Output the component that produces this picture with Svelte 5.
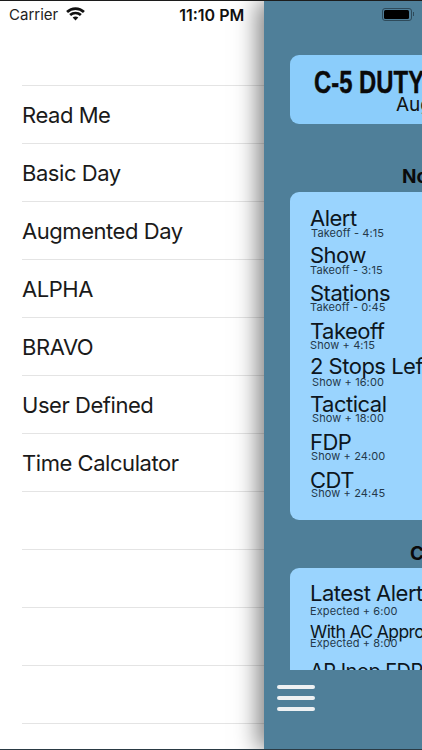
<script>
	const menu = ['Read Me', 'Basic Day', 'Augmented Day', 'ALPHA', 'BRAVO', 'User Defined', 'Time Calculator', '', '', '', '', '']

	const normal = [
		{ name: 'Alert', sub: 'Takeoff - 4:15', cls: 'in1 up2', rowCls: 'h37' },
		{ name: 'Show', sub: 'Takeoff - 3:15', cls: 'up2', rowCls: '' },
		{ name: 'Stations', sub: 'Takeoff - 0:45', cls: 'up3', rowCls: '' },
		{ name: 'Takeoff', sub: 'Show + 4:15', cls: 'up3', rowCls: 'h35' },
		{ name: '2 Stops Left', sub: 'Show + 16:00', cls: 'in2 up1', rowCls: '' },
		{ name: 'Tactical', sub: 'Show + 18:00', cls: 'in2 up3', rowCls: '' },
		{ name: 'FDP', sub: 'Show + 24:00', cls: 'in1 up3', rowCls: '' },
		{ name: 'CDT', sub: 'Show + 24:45', cls: 'in1 up4', rowCls: '' }
	]
</script>

<div class="screen">
	<aside class="side">
		<div class="status">
			<span class="carrier">Carrier</span>
			<svg class="wifi" viewBox="0 0 18 13" width="19" height="14">
				<path d="M1 4.6C5.5.3 12.5.3 17 4.6" />
				<path d="M3.9 7.5c2.9-2.6 7.3-2.6 10.2 0" />
				<path class="dot" d="M6.3 9.9 9 12.6l2.7-2.7c-1.6-1.3-3.8-1.3-5.4 0z" />
			</svg>
			<span class="time">11:10 PM</span>
		</div>
		<ul class="menu">
			{#each menu as item}
				<li>{item}</li>
			{/each}
		</ul>
	</aside>

	<main class="panel">
		<div class="panel-top">
			<div class="battery"><span class="charge"></span></div>
			<span class="nub"></span>
		</div>
		<div class="content">
			<div class="title-card">
				<h1>C-5 DUTY DAY</h1>
				<p>Augmented Day</p>
			</div>
			<h2 class="h-normal">Normal</h2>
			<div class="card normal">
				{#each normal as row}
					<div class="row {row.rowCls}">
						<div class="name">{row.name}</div>
						<div class="sub {row.cls}">{row.sub}</div>
					</div>
				{/each}
			</div>
			<h2 class="h-other">Contingency</h2>
			<div class="card other">
				<div class="name">Latest Alert</div>
				<div class="sub late">Expected + 6:00</div>
				<div class="name small">With AC Approval</div>
				<div class="sub tight">Expected + 8:00</div>
				<div class="name inop">AP Inop FDP</div>
			</div>
		</div>
		<footer class="footer">
			<button class="burger" aria-label="Menu">
				<span></span><span></span><span></span>
			</button>
		</footer>
	</main>
</div>

<style>
	:global(body) {
		margin: 0;
		background: #fff;
	}

	.screen {
		display: flex;
		width: 422px;
		height: 750px;
		box-sizing: border-box;
		border-top: 1px solid #1c1c1c;
		border-bottom: 1px solid #2a3a44;
		overflow: hidden;
		font-family: Inter, "Liberation Sans", sans-serif;
		color: #111;
	}

	/* left menu */
	.side {
		width: 264px;
		flex: none;
		background: #fff;
	}

	.status {
		display: flex;
		align-items: center;
		height: 27px;
		padding-left: 9px;
		font-size: 15px;
		white-space: nowrap;
	}

	.carrier {
		color: #222;
	}

	.wifi {
		margin-left: 8px;
		margin-top: -1px;
		fill: none;
		stroke: #111;
		stroke-width: 2.6;
	}

	.wifi .dot {
		fill: #111;
		stroke: none;
	}

	.time {
		margin-left: 94px;
		font-weight: 600;
		font-size: 16px;
	}

	.menu {
		list-style: none;
		margin: 57px 0 0 22px;
		padding: 0;
	}

	.menu li {
		height: 57px;
		line-height: 58px;
		border-top: 1px solid #e4e4e4;
		font-size: 22px;
		color: #1a1a1a;
		letter-spacing: -0.45px;
	}

	/* sliding panel */
	.panel {
		flex: 1;
		min-width: 0;
		display: flex;
		flex-direction: column;
		background: #4f7f99;
		box-shadow: -6px 0 22px rgba(0, 0, 0, 0.5);
		position: relative;
	}

	.panel-top {
		height: 54px;
		flex: none;
		display: flex;
		align-items: flex-start;
		padding: 7px 0 0 118px;
		box-sizing: border-box;
	}

	.battery {
		width: 30px;
		height: 13px;
		border: 1px solid #2e4a5a;
		border-radius: 3px;
		padding: 1px;
		box-sizing: border-box;
	}

	.charge {
		display: block;
		height: 100%;
		width: 25px;
		background: #000;
		border-radius: 1.5px;
	}

	.nub {
		width: 1px;
		height: 4px;
		margin: 4px 0 0 1px;
		background: #2e4a5a;
	}

	.content {
		flex: 1;
		min-height: 0;
		overflow: hidden;
		padding-left: 26px;
	}

	.title-card {
		width: 320px;
		height: 69px;
		box-sizing: border-box;
		background: #8bcdfb;
		border-radius: 9px;
		padding: 13px 0 0 24px;
	}

	.title-card h1 {
		margin: 0;
		font-family: "Liberation Sans", sans-serif;
		font-size: 31px;
		line-height: 30px;
		font-weight: 700;
		white-space: nowrap;
		color: #0a0a0a;
		-webkit-text-stroke: 0.4px #0a0a0a;
		transform: scaleX(0.77);
		transform-origin: left center;
	}

	.title-card p {
		margin: -4px 0 0 82px;
		font-size: 19px;
		line-height: 22px;
		white-space: nowrap;
	}

	h2 {
		margin: 0;
		font-size: 19px;
		line-height: 24px;
		font-weight: 700;
		white-space: nowrap;
		color: #0a0a0a;
	}

	.h-normal {
		margin-top: 41px;
		padding-left: 112px;
	}

	.h-other {
		margin-top: 22px;
		padding-left: 120px;
	}

	.card {
		width: 320px;
		box-sizing: border-box;
		background: #9ad4fe;
		border-radius: 9px;
		padding-left: 20px;
		white-space: nowrap;
	}

	.normal {
		height: 328px;
		margin-top: 3px;
		padding-top: 14px;
	}

	.other {
		margin-top: 2px;
		padding-top: 13px;
	}

	.row {
		height: 38px;
	}

	.row.h37 {
		height: 37px;
	}

	.row.h35 {
		height: 35px;
	}

	.name {
		font-size: 22px;
		line-height: 24px;
		letter-spacing: -0.5px;
		color: #0d1620;
	}

	.sub {
		font-size: 11px;
		line-height: 12px;
		margin-top: -1px;
		color: #24394a;
		letter-spacing: 0.1px;
	}

	.in1 {
		margin-left: 1px;
	}

	.in2 {
		margin-left: 2px;
	}

	.up1 {
		margin-top: -2px;
	}

	.up2 {
		margin-top: -3px;
	}

	.up3 {
		margin-top: -4px;
	}

	.up4 {
		margin-top: -5px;
	}

	.late {
		margin-top: 0;
	}

	.name.small {
		font-size: 17.5px;
		line-height: 22px;
		letter-spacing: -0.6px;
		margin-top: 4px;
	}

	.tight {
		margin-top: -6px;
	}

	.name.inop {
		margin-top: 10px;
		font-size: 20px;
	}

	.footer {
		height: 79px;
		flex: none;
		background: #4f7f99;
		position: relative;
	}

	.burger {
		display: flex;
		flex-direction: column;
		gap: 7px;
		width: 38px;
		margin: 15px 0 0 13px;
		padding: 0;
		border: 0;
		background: none;
	}

	.burger span {
		display: block;
		height: 4px;
		border-radius: 2px;
		background: #eef1f3;
	}
</style>
